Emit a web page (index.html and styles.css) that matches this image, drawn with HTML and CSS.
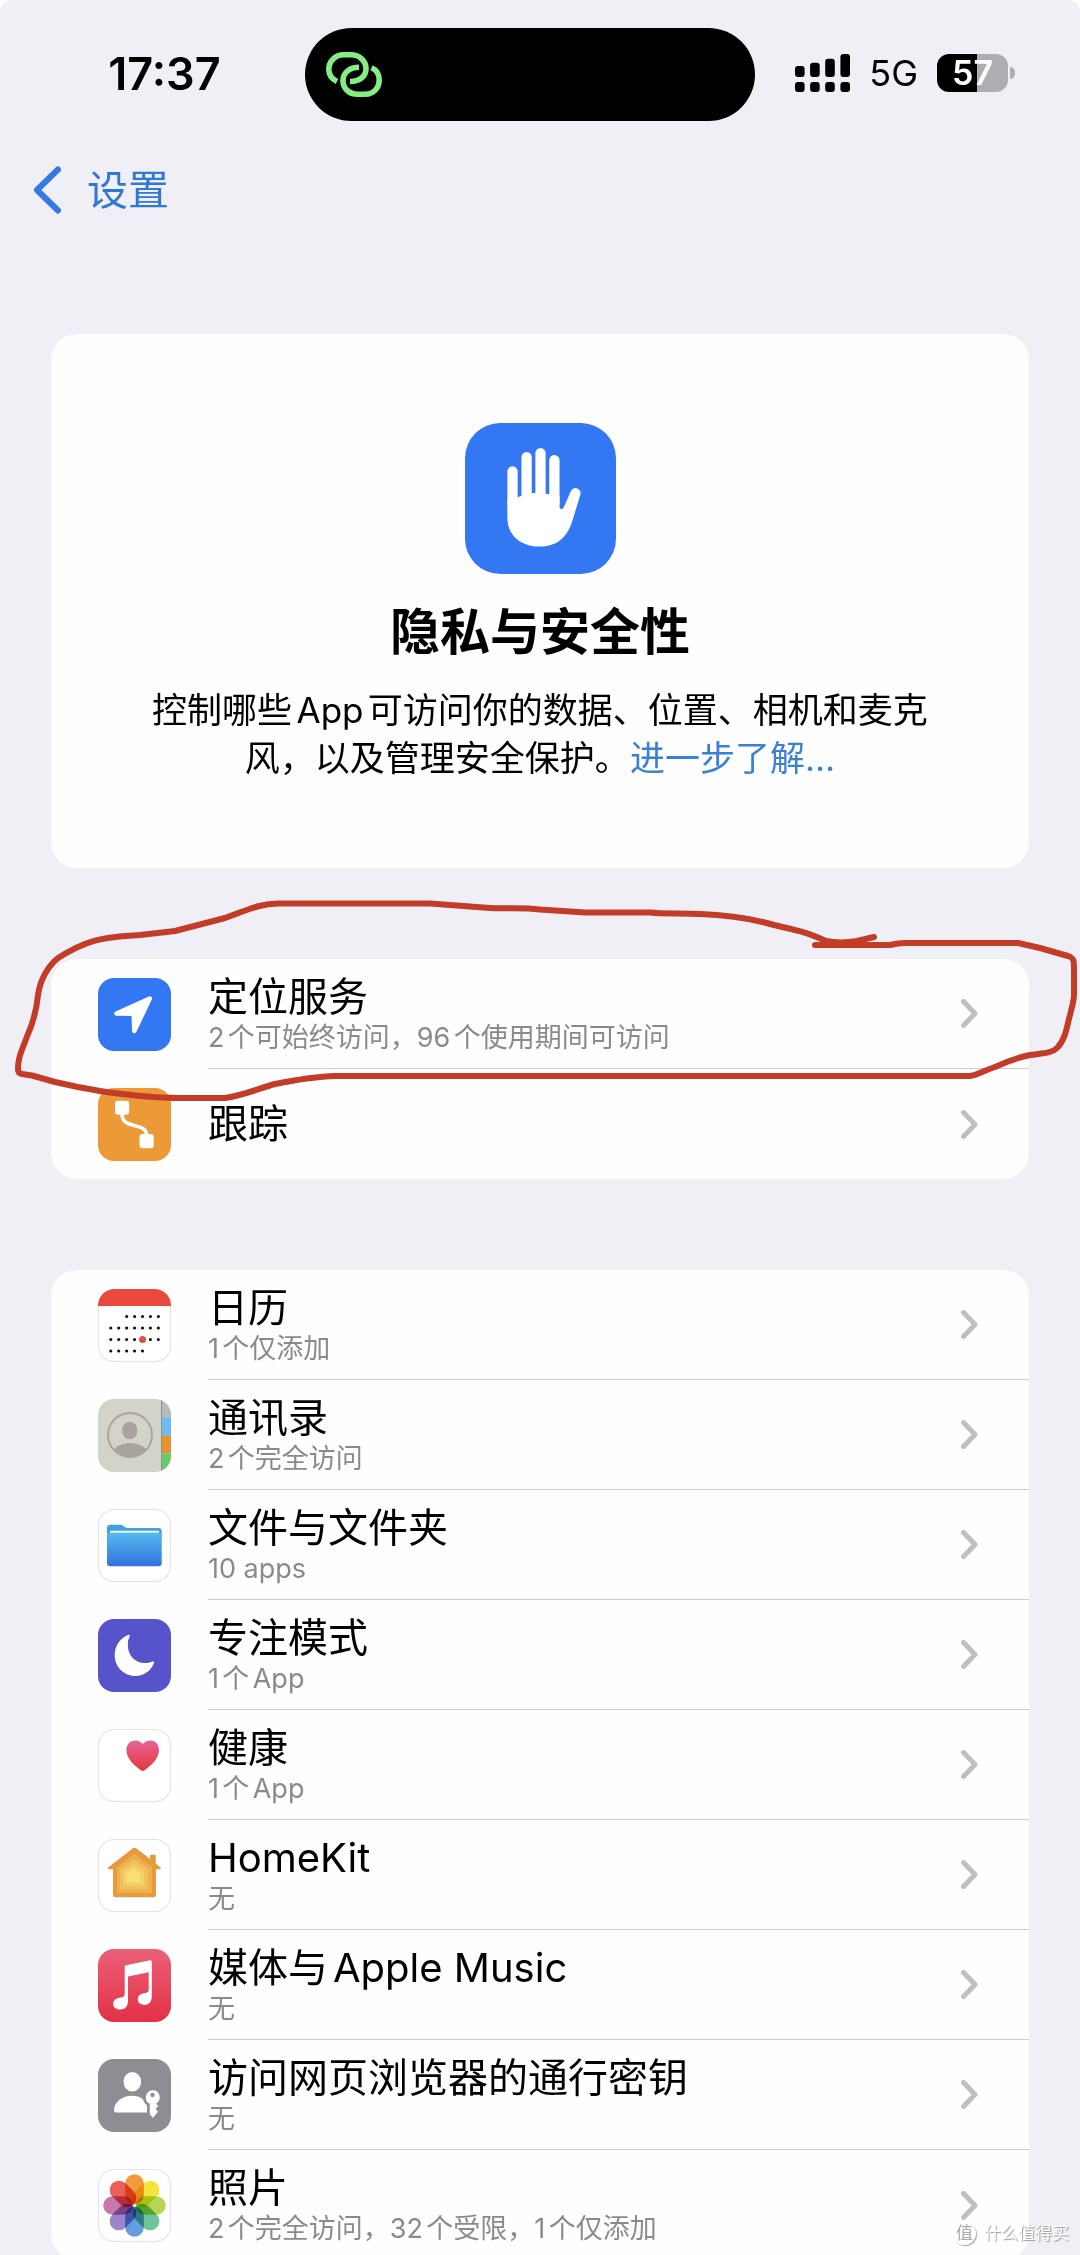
FILE: index.html
```
<!DOCTYPE html>
<html lang="zh-CN">
<head>
    <meta charset="UTF-8">
    <meta name="viewport" content="width=device-width, initial-scale=1.0">
    <title>隐私与安全性</title>
    <link rel="stylesheet" href="styles.css">
</head>
<body>
<div class="screen">
    <header>
        <div class="status-bar">
            <span class="time">17:37</span>
            <div class="island">
                <svg width="56" height="45" viewBox="0 0 56 45" fill="none" stroke="#85ee83" stroke-width="5.6">
                    <path d="M11 29.5C6 27 2.8 22.5 2.8 17.5C2.8 9 9.5 2.8 17.5 2.8H25C33.5 2.8 40 9 40 16.5C40 24.5 33.5 29.5 24 29.5"/>
                    <path d="M33 15.3C24 15.3 17 20.5 17 28.5C17 36.5 23 42.2 31.5 42.2H39C47.5 42.2 53.2 36 53.2 28C53.2 22 50.5 18 45.5 15.8"/>
                </svg>
            </div>
            <div class="indicators">
                <svg width="55" height="38" viewBox="0 0 55 38">
                    <rect x="0" y="12" width="9.6" height="11" rx="3"/>
                    <rect x="15.1" y="8.7" width="9.6" height="14.3" rx="3"/>
                    <rect x="30.2" y="4.7" width="9.6" height="18.3" rx="3"/>
                    <rect x="45.4" y="0" width="9.6" height="23" rx="3"/>
                    <rect x="0" y="28" width="9.6" height="10" rx="3"/>
                    <rect x="15.1" y="28" width="9.6" height="10" rx="3"/>
                    <rect x="30.2" y="28" width="9.6" height="10" rx="3"/>
                    <rect x="45.4" y="28" width="9.6" height="10" rx="3"/>
                </svg>
                <span class="network">5G</span>
                <div class="battery"><span class="level">57</span><span class="tip"></span></div>
            </div>
        </div>
        <nav class="nav-bar">
            <a class="back" href="#">
                <svg width="28" height="48" viewBox="0 0 28 48" fill="none" stroke="#3478e6" stroke-width="6" stroke-linecap="round" stroke-linejoin="round">
                    <path d="M25 3.5L4 24L25 44.5"/>
                </svg>
                <span>设置</span>
            </a>
        </nav>
    </header>

    <main>
        <section class="card hero">
            <svg class="hero-icon" viewBox="0 0 150 150">
                <rect width="150" height="150" rx="35" fill="#3378f2"/>
                <g stroke="#fff" stroke-width="10.2" stroke-linecap="round">
                    <path d="M47.2 48V80M61.2 34V80M75 30V80M88.8 37V80"/>
                </g>
                <path fill="#fff" d="M42.1 76Q50 76 54 73Q60 70 68 69.5Q80 69 93.9 73V84Q96 88 98.5 83L105 68A5 5 0 0 1 114.5 71.5L107 96C102 113 92 122.7 74 122.7C55 122.7 42.1 111 42.1 94Z"/>
            </svg>
            <h1>隐私与安全性</h1>
            <p>控制哪些App可访问你的数据、位置、相机和麦克风，以及管理安全保护。<a href="#">进一步了解...</a></p>
        </section>

        <section class="marked">
            <ul class="card list">
                <li><a href="#">
                    <svg class="icon" viewBox="0 0 73 73">
                        <rect width="73" height="73" rx="16" fill="#3378f2"/>
                        <path d="M51.8 20.5L18.5 35.5L35.7 35.7L36.3 53Z" fill="#fff" stroke="#fff" stroke-width="4.5" stroke-linejoin="round"/>
                    </svg>
                    <div class="row">
                        <div class="text"><span class="title">定位服务</span><span class="sub">2个可始终访问，96个使用期间可访问</span></div>
                        <svg class="chevron" viewBox="0 0 17 29"><path d="M2.5 2.5L14 14.5L2.5 26.5"/></svg>
                    </div>
                </a></li>
                <li><a href="#">
                    <svg class="icon" viewBox="0 0 73 73">
                        <rect width="73" height="73" rx="16" fill="#eb9a37"/>
                        <rect x="17" y="12.7" width="14.2" height="14" rx="3" fill="#fff"/>
                        <rect x="41.5" y="46" width="14.2" height="14.3" rx="3" fill="#fff"/>
                        <path d="M24 26C24 34 30 36 36 37.5C44 39.5 48.6 41 48.6 47" fill="none" stroke="#fff" stroke-width="3.6"/>
                    </svg>
                    <div class="row">
                        <div class="text"><span class="title">跟踪</span></div>
                        <svg class="chevron" viewBox="0 0 17 29"><path d="M2.5 2.5L14 14.5L2.5 26.5"/></svg>
                    </div>
                </a></li>
            </ul>
            <!-- hand-drawn ring round the location row -->
            <svg class="ring" viewBox="0 0 1080 210">
                <path d="M874 37L857 41Q840 44 826 41C815 36 805 32 795 30L774 25C750 18 730 15 700 14C680 13 665 14 650 12.5H585L540 9.5C520 7 505 9 490 8L430 3.5H278C262 3.5 252 8 225 18L175 31L140 35C100 37 85 41 58 58C45 69 40 82 38 95C36 115 32 125 28 134C20 155 18 158 18 170Q18 173 22 174L32 175.5L55 182L78 187L100 191C140 197 160 198 180 198H225C245 195 260 188 275 184C295 180 315 176.5 335 176H970C980 174 985 170 995 167C1010 160 1020 157 1030 155C1045 153 1052 153 1057 148C1066 139 1067 125 1070 115Q1074 100 1074 95V70C1074 60 1074 58 1068 56L1040 48L1018 43H905Q898 43 890 45H815"/>
            </svg>
        </section>

        <section>
            <ul class="card list">
                <li><a href="#">
                    <svg class="icon bordered" viewBox="0 0 73 73">
                        <path d="M0 17V16A16 16 0 0 1 16 0H57A16 16 0 0 1 73 16V17Z" fill="#ea4a3e"/>
                        <g stroke="#111" stroke-width="3.2" stroke-linecap="round" stroke-dasharray="0 7.92">
                            <path d="M28.7 27.5H61"/>
                            <path d="M12.8 39H61"/>
                            <path d="M12.8 50.5H61"/>
                            <path d="M12.8 62H45"/>
                        </g>
                        <circle cx="44.5" cy="50.5" r="3.5" fill="#d8524b"/>
                    </svg>
                    <div class="row">
                        <div class="text"><span class="title">日历</span><span class="sub">1个仅添加</span></div>
                        <svg class="chevron" viewBox="0 0 17 29"><path d="M2.5 2.5L14 14.5L2.5 26.5"/></svg>
                    </div>
                </a></li>
                <li><a href="#">
                    <svg class="icon" viewBox="0 0 73 73">
                        <clipPath id="app"><rect width="73" height="73" rx="16"/></clipPath>
                        <clipPath id="face"><circle cx="32" cy="36" r="21.5"/></clipPath>
                        <g clip-path="url(#app)">
                            <rect width="73" height="73" fill="#d3d3ca"/>
                            <rect x="63.5" width="10" height="19" fill="#b9babb"/>
                            <rect x="63.5" y="18.5" width="10" height="18" fill="#69bdf0"/>
                            <rect x="63.5" y="36.5" width="10" height="18" fill="#e8922f"/>
                            <rect x="63.5" y="54.5" width="10" height="19" fill="#68cb6b"/>
                            <path d="M63.5 0V73" stroke="#8f9088"/>
                        </g>
                        <g fill="#a9a39f">
                            <ellipse cx="31.7" cy="31.5" rx="7.7" ry="8.7"/>
                            <ellipse cx="32" cy="56" rx="18" ry="12" clip-path="url(#face)"/>
                        </g>
                        <circle cx="32" cy="36" r="22" fill="none" stroke="#a9a39f" stroke-width="1.8"/>
                    </svg>
                    <div class="row">
                        <div class="text"><span class="title">通讯录</span><span class="sub">2个完全访问</span></div>
                        <svg class="chevron" viewBox="0 0 17 29"><path d="M2.5 2.5L14 14.5L2.5 26.5"/></svg>
                    </div>
                </a></li>
                <li><a href="#">
                    <svg class="icon bordered" viewBox="0 0 73 73">
                        <linearGradient id="folder" x2="0" y2="1"><stop stop-color="#56b9ee"/><stop offset="1" stop-color="#3570e0"/></linearGradient>
                        <path d="M9 19Q9 15.7 12.5 15.7H22Q24 15.7 25.5 17L27 18.3Q28 19 30 19H60.5Q63.7 19 63.7 22V30H9Z" fill="#41a0dd"/>
                        <path d="M12 22.7H61" stroke="#e9f6fd" stroke-width="2"/>
                        <path d="M9 24H63.7V54Q63.7 57.3 60.5 57.3H12.3Q9 57.3 9 54Z" fill="url(#folder)"/>
                    </svg>
                    <div class="row">
                        <div class="text"><span class="title">文件与文件夹</span><span class="sub">10 apps</span></div>
                        <svg class="chevron" viewBox="0 0 17 29"><path d="M2.5 2.5L14 14.5L2.5 26.5"/></svg>
                    </div>
                </a></li>
                <li><a href="#">
                    <svg class="icon" viewBox="0 0 73 73">
                        <rect width="73" height="73" rx="16" fill="#5753cb"/>
                        <path fill="#fff" d="M30.5 15.8C22 19 16.7 27 16.7 36C16.7 48 26 57 37.5 57C46 57 53.5 51.5 56 43.8Q56.5 42 54.5 42.5C52 43.6 49.5 44 47 44C37 44 29.8 36.5 29.8 26C29.8 22.5 30.5 20 31.7 17.3Q32.2 15.5 30.5 15.8Z"/>
                    </svg>
                    <div class="row">
                        <div class="text"><span class="title">专注模式</span><span class="sub">1个App</span></div>
                        <svg class="chevron" viewBox="0 0 17 29"><path d="M2.5 2.5L14 14.5L2.5 26.5"/></svg>
                    </div>
                </a></li>
                <li><a href="#">
                    <svg class="icon bordered" viewBox="0 0 73 73">
                        <linearGradient id="heart" x2="0" y2="1"><stop stop-color="#e8619f"/><stop offset="1" stop-color="#e23a33"/></linearGradient>
                        <path fill="url(#heart)" d="M44.7 15C47 12.5 49.5 11.5 52.5 11.5C57.5 11.5 61 15.5 61 21C61 30 53 36.5 46.5 41.3Q44.7 42.6 42.9 41.3C36.5 36.5 28.4 30 28.4 21C28.4 15.5 32 11.5 37 11.5C40 11.5 42.5 12.5 44.7 15Z"/>
                    </svg>
                    <div class="row">
                        <div class="text"><span class="title">健康</span><span class="sub">1个App</span></div>
                        <svg class="chevron" viewBox="0 0 17 29"><path d="M2.5 2.5L14 14.5L2.5 26.5"/></svg>
                    </div>
                </a></li>
                <li><a href="#">
                    <svg class="icon bordered" viewBox="0 0 73 73">
                        <path fill="#e59a40" d="M34.5 9.5Q36.5 8 38.5 9.5L52 20V17Q52 15.7 53.3 15.7H56.5Q57.7 15.7 57.7 17V24.5L62.5 28.5Q63.5 30.2 61.5 30.2H58V56Q58 58.3 56 58.3H17Q15 58.3 15 56V30.2H11Q9 30 10.5 28.3Z"/>
                        <path fill="#edb04c" d="M36.5 15L54 28.5V54H19V28.5Z"/>
                        <path fill="#f2bf59" d="M36 20L50.5 30.5V50.5H22V30.5Z"/>
                        <path fill="#f5cf67" d="M35.5 25L46.5 33V46.5H25V33Z"/>
                        <path fill="#f8df78" d="M35 29.5L42.5 35V43.5H28V35Z"/>
                    </svg>
                    <div class="row">
                        <div class="text"><span class="title">HomeKit</span><span class="sub">无</span></div>
                        <svg class="chevron" viewBox="0 0 17 29"><path d="M2.5 2.5L14 14.5L2.5 26.5"/></svg>
                    </div>
                </a></li>
                <li><a href="#">
                    <svg class="icon" viewBox="0 0 73 73">
                        <linearGradient id="music" x2="0" y2="1"><stop stop-color="#ec6078"/><stop offset="1" stop-color="#e23144"/></linearGradient>
                        <rect width="73" height="73" rx="16" fill="url(#music)"/>
                        <path fill="#fff" d="M26.7 17.8Q26.7 16.5 28 16.2L52 11.2Q53.8 11 53.8 12.8V47C53.8 53 51 55.8 46.5 55.8C42.5 55.8 39.8 53.5 39.8 50.3C39.8 46.5 42.5 44.8 46 44.2C49.5 43.6 50.7 43 50.7 40V23.2L30 27.6V51.5C30 57.5 27 60.5 22 60.5C18 60.5 15.2 58.2 15.2 55C15.2 51 18 49.5 21.5 48.8C25.5 48 26.7 47.5 26.7 44.5Z"/>
                    </svg>
                    <div class="row">
                        <div class="text"><span class="title">媒体与Apple Music</span><span class="sub">无</span></div>
                        <svg class="chevron" viewBox="0 0 17 29"><path d="M2.5 2.5L14 14.5L2.5 26.5"/></svg>
                    </div>
                </a></li>
                <li><a href="#">
                    <svg class="icon" viewBox="0 0 73 73">
                        <rect width="73" height="73" rx="16" fill="#8e8d93"/>
                        <ellipse cx="34.3" cy="22.8" rx="8.8" ry="9.8" fill="#fff"/>
                        <path fill="#fff" d="M18 53.5Q16 53.5 16 51C16.5 43 24 36.8 34 36.8C39 36.8 42.5 38 45 40.5Q46 44 49 46.5V53.5Z"/>
                        <path fill="#fff" fill-rule="evenodd" d="M54.5 31.2A7.2 7.2 0 0 1 58 44.7L60.2 47L57.5 50L60 52.7L55 58.7L51.8 55.5V44.8A7.2 7.2 0 0 1 54.5 31.2ZM54.5 33.8A2.2 2.2 0 1 0 54.5 38.2A2.2 2.2 0 1 0 54.5 33.8Z"/>
                    </svg>
                    <div class="row">
                        <div class="text"><span class="title">访问网页浏览器的通行密钥</span><span class="sub">无</span></div>
                        <svg class="chevron" viewBox="0 0 17 29"><path d="M2.5 2.5L14 14.5L2.5 26.5"/></svg>
                    </div>
                </a></li>
                <li><a href="#">
                    <svg class="icon bordered" viewBox="0 0 73 73">
                        <g class="petals" transform="translate(36.5 36.5)">
                            <rect x="-9.3" y="-31.3" width="18.6" height="30" rx="9.3" fill="#f09c3c"/>
                            <rect x="-9.3" y="-31.3" width="18.6" height="30" rx="9.3" fill="#f3e53a" transform="rotate(45)"/>
                            <rect x="-9.3" y="-31.3" width="18.6" height="30" rx="9.3" fill="#b5d754" transform="rotate(90)"/>
                            <rect x="-9.3" y="-31.3" width="18.6" height="30" rx="9.3" fill="#70c49b" transform="rotate(135)"/>
                            <rect x="-9.3" y="-31.3" width="18.6" height="30" rx="9.3" fill="#629fdc" transform="rotate(180)"/>
                            <rect x="-9.3" y="-31.3" width="18.6" height="30" rx="9.3" fill="#9b86c9" transform="rotate(225)"/>
                            <rect x="-9.3" y="-31.3" width="18.6" height="30" rx="9.3" fill="#c878ad" transform="rotate(270)"/>
                            <rect x="-9.3" y="-31.3" width="18.6" height="30" rx="9.3" fill="#ea5f5a" transform="rotate(315)"/>
                        </g>
                    </svg>
                    <div class="row">
                        <div class="text"><span class="title">照片</span><span class="sub">2个完全访问，32个受限，1个仅添加</span></div>
                        <svg class="chevron" viewBox="0 0 17 29"><path d="M2.5 2.5L14 14.5L2.5 26.5"/></svg>
                    </div>
                </a></li>
            </ul>
        </section>
    </main>

    <div class="watermark"><span class="badge">值</span><span>什么值得买</span></div>
</div>
</body>
</html>
```

FILE: styles.css
```
* {
    box-sizing: border-box;
}
body {
    margin: 0;
    background: #fff;
    color: #000;
    font-family: Inter, "Noto Sans CJK SC", sans-serif;
    text-autospace: normal;
}
a {
    color: inherit;
    text-decoration: none;
}
svg {
    display: block;
    flex-shrink: 0;
}
.screen {
    position: relative;
    height: 100vh;
    overflow: hidden;
    background: #f0eff5;
    border-radius: 12px 12px 0 0;
}

/* status bar */
.status-bar {
    display: flex;
    align-items: center;
    padding-top: 28px;
}
.time {
    width: 305px;
    padding: 0 0 2px 24px;
    text-align: center;
    font-size: 45px;
    font-weight: 600;
}
.island {
    flex: 1;
    display: flex;
    align-items: center;
    height: 93px;
    padding-left: 21px;
    border-radius: 47px;
    background: #000;
}
.indicators {
    display: flex;
    align-items: center;
    gap: 19px;
    padding: 0 65px 4px 40px;
}
.network {
    font-size: 36px;
    line-height: 38px;
}
.battery {
    display: flex;
    align-items: center;
    gap: 2px;
}
.level {
    width: 71px;
    height: 38px;
    border-radius: 12px;
    background: linear-gradient(90deg, #000 56%, #aeaeb2 56%);
    color: #fff;
    font-size: 34px;
    line-height: 38px;
    font-weight: 600;
    text-align: center;
}
.tip {
    width: 5px;
    height: 12px;
    border-radius: 0 6px 6px 0;
    background: #aeaeb2;
}

/* nav bar */
.nav-bar {
    display: flex;
    align-items: center;
    height: 138px;
    padding-left: 33px;
}
.back {
    display: flex;
    align-items: center;
    gap: 26px;
    color: #2f78d4;
    font-size: 41px;
    line-height: 48px;
}

/* cards */
main {
    padding-top: 75px;
}
section {
    margin: 0 51px 91px;
}
.card {
    background: #fefefe;
    border-radius: 26px;
}
.hero {
    display: flex;
    flex-direction: column;
    align-items: center;
    padding: 89px 90px 86px;
    text-align: center;
}
.hero-icon {
    width: 151px;
    height: 151px;
}
h1 {
    margin: 26px 0 22px;
    font-size: 50px;
    line-height: 64px;
    font-weight: 700;
}
.hero p {
    margin: 0;
    font-size: 35px;
    line-height: 48px;
}
.hero p a {
    color: #3a80d8;
    text-autospace: no-autospace;
}

/* lists */
.list {
    margin: 0;
    padding: 0;
    list-style: none;
}
.list a {
    display: flex;
    align-items: center;
    gap: 37px;
    height: 110px;
    padding-left: 47px;
}
.icon {
    width: 73px;
    height: 73px;
}
.bordered {
    border-radius: 16px;
    background: #fff;
    box-shadow: inset 0 0 0 1px #e2e2e4;
}
.row {
    flex: 1;
    align-self: stretch;
    display: flex;
    align-items: center;
    justify-content: space-between;
    padding-right: 51px;
    border-bottom: 1px solid #cdcdcf;
}
.list li:last-child .row {
    border-bottom: none;
}
.text {
    display: flex;
    flex-direction: column;
}
.title {
    font-size: 40px;
    line-height: 48px;
}
.sub {
    color: #8a8a8c;
    font-size: 27px;
    line-height: 34px;
}
.chevron {
    width: 17px;
    height: 29px;
    fill: none;
    stroke: #bfbfbf;
    stroke-width: 5;
    stroke-linecap: round;
    stroke-linejoin: round;
}
.petals rect {
    mix-blend-mode: multiply;
}

.marked {
    position: relative;
}
.ring {
    position: absolute;
    top: -59px;
    left: -51px;
    width: 100vw;
    fill: none;
    stroke: #c23c27;
    stroke-width: 6;
    stroke-linecap: round;
    stroke-linejoin: round;
    pointer-events: none;
}

.watermark {
    position: absolute;
    right: 11px;
    bottom: 10px;
    display: flex;
    align-items: center;
    gap: 8px;
    color: #fff;
    font-size: 17px;
    line-height: 24px;
    text-shadow: 1px 1px 1px #999;
}
.badge {
    width: 23px;
    height: 23px;
    border-radius: 50%;
    background: #fff;
    box-shadow: 1px 1px 1px #aaa;
    color: #aaa;
    line-height: 22px;
    text-align: center;
    text-shadow: none;
}
```
